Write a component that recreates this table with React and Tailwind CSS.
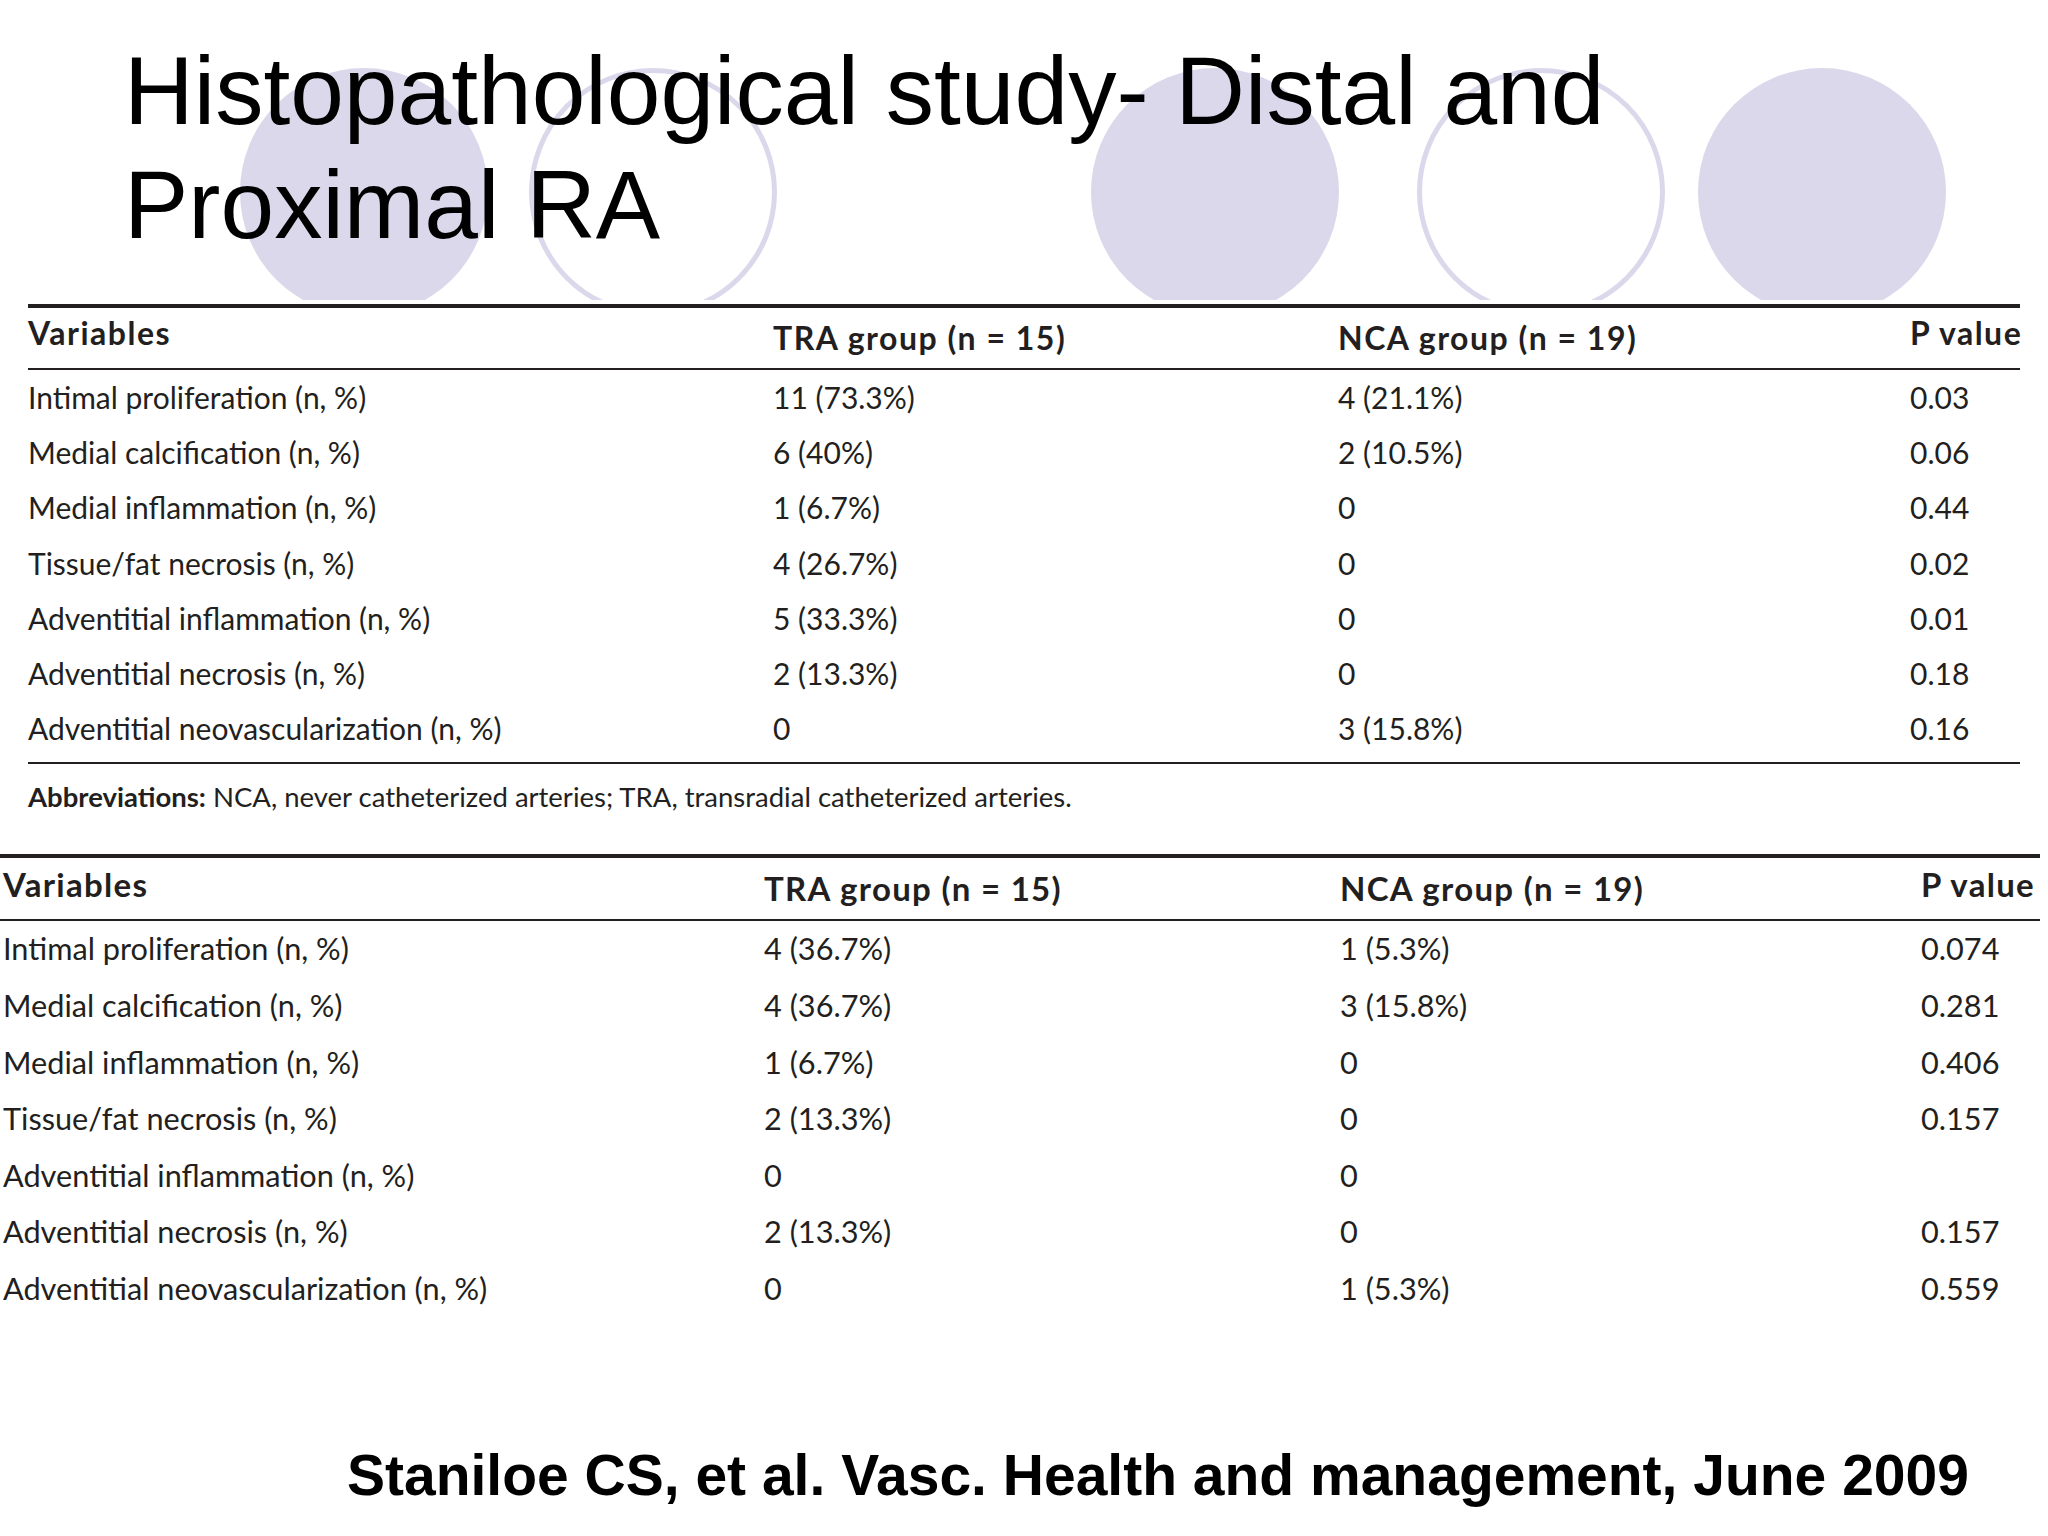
import React from 'react';

const table1 = [
  ['Intimal proliferation (n, %)', '11 (73.3%)', '4 (21.1%)', '0.03'],
  ['Medial calcification (n, %)', '6 (40%)', '2 (10.5%)', '0.06'],
  ['Medial inflammation (n, %)', '1 (6.7%)', '0', '0.44'],
  ['Tissue/fat necrosis (n, %)', '4 (26.7%)', '0', '0.02'],
  ['Adventitial inflammation (n, %)', '5 (33.3%)', '0', '0.01'],
  ['Adventitial necrosis (n, %)', '2 (13.3%)', '0', '0.18'],
  ['Adventitial neovascularization (n, %)', '0', '3 (15.8%)', '0.16'],
];

const table2 = [
  ['Intimal proliferation (n, %)', '4 (36.7%)', '1 (5.3%)', '0.074'],
  ['Medial calcification (n, %)', '4 (36.7%)', '3 (15.8%)', '0.281'],
  ['Medial inflammation (n, %)', '1 (6.7%)', '0', '0.406'],
  ['Tissue/fat necrosis (n, %)', '2 (13.3%)', '0', '0.157'],
  ['Adventitial inflammation (n, %)', '0', '0', ''],
  ['Adventitial necrosis (n, %)', '2 (13.3%)', '0', '0.157'],
  ['Adventitial neovascularization (n, %)', '0', '1 (5.3%)', '0.559'],
];

function Circles() {
  return (
    <div className="absolute left-0 top-0 w-[2048px] h-[300px] overflow-hidden">
      <div className="absolute left-[240px] top-[68px] w-[248px] h-[248px] rounded-full bg-[#dad8ea]" />
      <div className="absolute left-[529px] top-[68px] w-[248px] h-[248px] rounded-full border-[5px] border-[#dad8ea]" />
      <div className="absolute left-[1091px] top-[68px] w-[248px] h-[248px] rounded-full bg-[#dad8ea]" />
      <div className="absolute left-[1417px] top-[68px] w-[248px] h-[248px] rounded-full border-[5px] border-[#dad8ea]" />
      <div className="absolute left-[1698px] top-[68px] w-[248px] h-[248px] rounded-full bg-[#dad8ea]" />
    </div>
  );
}

function Table1() {
  return (
    <div className="ml-[28px] w-[1992px] mt-[42px] bg-white text-[#231f20] font-['Lato',sans-serif]">
      <div className="border-t-4 border-[#231f20]" />
      <div className="grid grid-cols-[745px_565px_572px_1fr] h-[60px] font-bold text-[32px] tracking-[1.5px] leading-[38px] whitespace-nowrap">
        <div className="pt-[6px]">Variables</div>
        <div className="pt-[11px]">TRA group (n = 15)</div>
        <div className="pt-[11px]">NCA group (n = 19)</div>
        <div className="pt-[6px]">P value</div>
      </div>
      <div className="border-t-2 border-[#231f20]" />
      <div className="pb-[6px]">
        {table1.map((r, i) => (
          <div key={i} className="grid grid-cols-[745px_565px_572px_1fr] h-[55.2px] text-[30px] leading-[55px] whitespace-nowrap">
            <div>{r[0]}</div>
            <div>{r[1]}</div>
            <div>{r[2]}</div>
            <div>{r[3]}</div>
          </div>
        ))}
      </div>
      <div className="border-t-2 border-[#231f20]" />
      <div className="mt-[18px] text-[27.5px] leading-[30px] whitespace-nowrap">
        <span className="font-bold">Abbreviations:</span> NCA, never catheterized arteries; TRA, transradial catheterized arteries.
      </div>
    </div>
  );
}

function Table2() {
  return (
    <div className="w-[2040px] mt-[42px] bg-white text-[#231f20] font-['Lato',sans-serif]">
      <div className="border-t-4 border-[#231f20]" />
      <div className="grid grid-cols-[764px_576px_581px_1fr] h-[61px] font-bold text-[33px] tracking-[1.3px] leading-[38px] whitespace-nowrap">
        <div className="pl-[3px] pt-[7px]">Variables</div>
        <div className="pt-[11px]">TRA group (n = 15)</div>
        <div className="pt-[11px]">NCA group (n = 19)</div>
        <div className="pt-[7px]">P value</div>
      </div>
      <div className="border-t-2 border-[#231f20]" />
      {table2.map((r, i) => (
        <div key={i} className="grid grid-cols-[764px_576px_581px_1fr] h-[56.6px] text-[30.7px] leading-[56px] whitespace-nowrap">
          <div className="pl-[3px]">{r[0]}</div>
          <div>{r[1]}</div>
          <div>{r[2]}</div>
          <div>{r[3]}</div>
        </div>
      ))}
    </div>
  );
}

export default function App() {
  return (
    <div className="relative w-[2048px] h-[1536px] bg-white overflow-hidden">
      <Circles />
      <div className="relative">
        <h1 className="pl-[124px] pt-[34px] text-[96.5px] leading-[114px] text-black font-['Liberation_Sans',Arial,sans-serif] font-normal">
          Histopathological study- Distal and<br />Proximal RA
        </h1>
        <Table1 />
        <Table2 />
        <p className="mt-[126px] pl-[347px] text-[57px] leading-[64px] font-bold text-black font-['Liberation_Sans',Arial,sans-serif] whitespace-nowrap">
          Staniloe CS, et al. Vasc. Health and management, June 2009
        </p>
      </div>
    </div>
  );
}
